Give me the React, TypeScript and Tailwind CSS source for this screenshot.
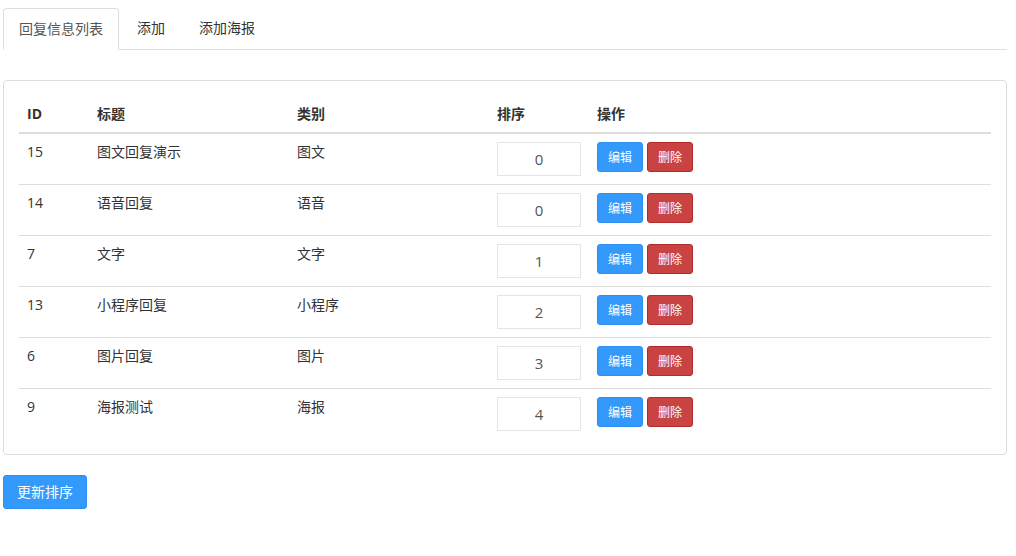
import React from "react";

const rows = [
  { id: "15", title: "图文回复演示", type: "图文", sort: "0" },
  { id: "14", title: "语音回复", type: "语音", sort: "0" },
  { id: "7", title: "文字", type: "文字", sort: "1" },
  { id: "13", title: "小程序回复", type: "小程序", sort: "2" },
  { id: "6", title: "图片回复", type: "图片", sort: "3" },
  { id: "9", title: "海报测试", type: "海报", sort: "4" },
];

export default function App() {
  return (
    <div
      className="bg-white min-h-[556px] text-[14px] leading-[20px] text-[#333]"
      style={{ fontFamily: '"Open Sans", "Noto Sans CJK SC", sans-serif' }}
    >
      <div className="ml-[3px] w-[1004px] pt-[8px]">
        {/* tabs */}
        <div className="flex border-b border-[#ddd] h-[42px]">
          <div className="h-[42px] px-[15px] py-[10px] border border-[#ddd] border-b-white rounded-t-[4px] bg-white text-[#555] mr-[2px] -mb-px w-[116px] box-border">
            回复信息列表
          </div>
          <div className="h-[42px] pl-[16px] pr-[15px] py-[10px] mr-[4px] text-[#333]">添加</div>
          <div className="h-[42px] px-[15px] py-[10px] text-[#333]">添加海报</div>
        </div>

        {/* panel */}
        <div className="mt-[30px] border border-[#ddd] rounded-[4px] p-[15px] w-[1004px]">
          <table className="w-full border-collapse">
            <thead>
              <tr className="border-b-2 border-[#ddd]">
                <th className="w-[70px] p-[8px] text-left font-bold">ID</th>
                <th className="w-[200px] p-[8px] text-left font-bold">标题</th>
                <th className="w-[200px] p-[8px] text-left font-bold">类别</th>
                <th className="w-[100px] p-[8px] text-left font-bold">排序</th>
                <th className="p-[8px] text-left font-bold">操作</th>
              </tr>
            </thead>
            <tbody>
              {rows.map((r, i) => (
                <tr key={r.id} className={i > 0 ? "border-t border-[#ddd]" : ""}>
                  <td className="p-[8px] align-top">{r.id}</td>
                  <td className="p-[8px] align-top">{r.title}</td>
                  <td className="p-[8px] align-top">{r.type}</td>
                  <td className="p-[8px] align-top">
                    <input
                      readOnly
                      value={r.sort}
                      className="block w-[84px] h-[34px] border border-[#e5e5e5] text-center text-[15px] text-[#555] outline-none"
                    />
                  </td>
                  <td className="p-[8px] align-top">
                    <div className="flex gap-[4px]">
                      <button className="w-[46px] h-[30px] pt-[2px] rounded-[3px] bg-[#3399fa] border border-[#2e8fef] text-white text-[12px]">
                        编辑
                      </button>
                      <button className="w-[46px] h-[30px] pt-[2px] rounded-[3px] bg-[#c94343] border border-[#b32a2a] text-white text-[12px]">
                        删除
                      </button>
                    </div>
                  </td>
                </tr>
              ))}
            </tbody>
          </table>
        </div>

        <button className="mt-[20px] w-[84px] h-[34px] rounded-[3px] bg-[#3399fa] border border-[#2e8fef] text-white text-[14px]">
          更新排序
        </button>
      </div>
    </div>
  );
}
